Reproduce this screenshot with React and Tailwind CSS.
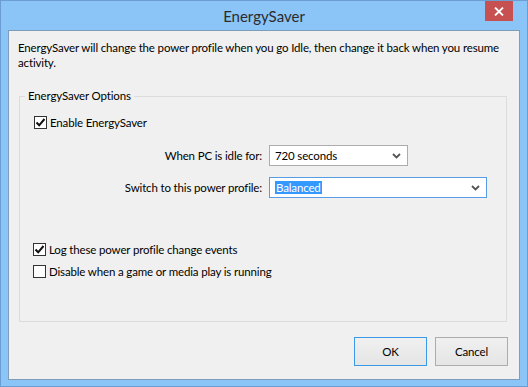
import React from "react";

const font = "font-['Segoe_UI','Lato','Noto_Sans',sans-serif]";

const Check = ({ checked }) => (
  <span className="w-[13px] h-[13px] border border-[#333] bg-white flex items-center justify-center shrink-0">
    {checked && (
      <svg width="11" height="11" viewBox="0 0 11 11">
        <path d="M1.5 5.5 L4.2 8.3 L9.5 2" fill="none" stroke="#111" strokeWidth="2" />
      </svg>
    )}
  </span>
);

const Chevron = () => (
  <svg width="9" height="6" viewBox="0 0 9 6" className="shrink-0">
    <path d="M1 1 L4.5 4.5 L8 1" fill="none" stroke="#555" strokeWidth="1.8" />
  </svg>
);

const Select = ({ width, focused, children }) => (
  <div
    className={`h-[21px] ${width} border ${focused ? "border-[#569de5]" : "border-[#acacac]"} bg-white flex items-center pl-[5px] pr-[6px] justify-between`}
  >
    <span className="text-black leading-[15px]">{children}</span>
    <Chevron />
  </div>
);

export default function App() {
  return (
    <div className={`w-[528px] h-[387px] bg-[#8bc4f7] border border-[#6d9ed3] flex flex-col ${font} relative`}>
      {/* title bar */}
      <div className="h-[29px] flex items-center justify-center">
        <span className="text-[15px] text-[#2b2b2b] leading-[18px]">EnergySaver</span>
      </div>
      <button className="absolute top-0 right-[14px] w-[28px] h-[20px] bg-[#c75050] flex items-center justify-center">
        <svg width="10" height="9" viewBox="0 0 10 9">
          <path d="M1 0.5 L9 8.5 M9 0.5 L1 8.5" stroke="#fff" strokeWidth="1.8" />
        </svg>
      </button>

      {/* client area */}
      <div className="mx-[7px] h-[350px] bg-[#f0f0f0] border border-[#7f9db9] flex flex-col text-[11.5px] tracking-[-0.15px] leading-[15px] text-black">
        <p className="pl-[9px] pt-[9px] whitespace-nowrap">
          EnergySaver will change the power profile when you go Idle, then change it back when you resume
          <br />
          activity.
        </p>

        <fieldset className="ml-[10px] mr-[12px] mt-[19px] h-[233px] border border-[#dcdcdc] flex flex-col">
          <legend className="ml-[5px] px-[3px] leading-[14px]">EnergySaver Options</legend>

          <label className="flex items-center gap-[3px] ml-[14px] mt-[12px]">
            <Check checked />
            <span>Enable EnergySaver</span>
          </label>

          <div className="flex items-center mt-[15px]">
            <span className="w-[242px] text-right">When PC is idle for:</span>
            <div className="ml-[7px]">
              <Select width="w-[139px]">720 seconds</Select>
            </div>
          </div>

          <div className="flex items-center mt-[11px]">
            <span className="w-[242px] text-right">Switch to this power profile:</span>
            <div className="ml-[7px]">
              <Select width="w-[218px]" focused>
                <span className="bg-[#3399ff] text-white px-[1px]">Balanced</span>
              </Select>
            </div>
          </div>

          <label className="flex items-center gap-[3px] ml-[13px] mt-[44px]">
            <Check checked />
            <span>Log these power profile change events</span>
          </label>
          <label className="flex items-center gap-[3px] ml-[13px] mt-[7px]">
            <Check />
            <span>Disable when a game or media play is running</span>
          </label>
        </fieldset>

        <div className="flex justify-end gap-[8px] pr-[11px] mt-[15px]">
          <button className="w-[73px] h-[29px] border border-[#3c99e6] bg-gradient-to-b from-[#f0f0f0] to-[#e5e5e5]">
            OK
          </button>
          <button className="w-[73px] h-[29px] border border-[#acacac] bg-gradient-to-b from-[#f0f0f0] to-[#e5e5e5]">
            Cancel
          </button>
        </div>
      </div>
    </div>
  );
}
